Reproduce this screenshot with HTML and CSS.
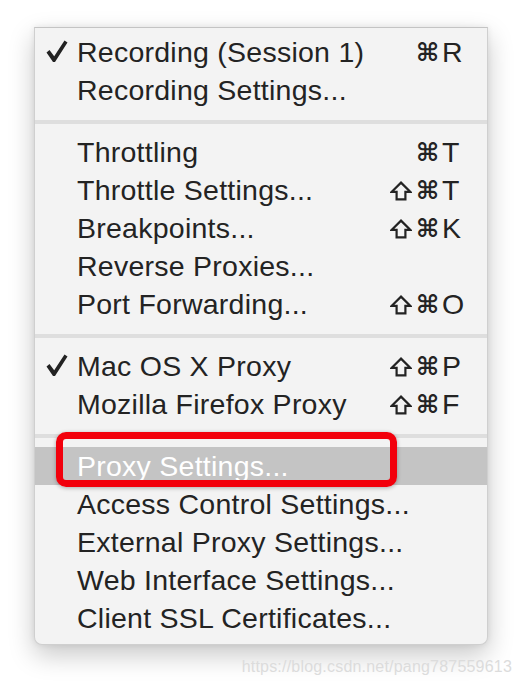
FILE: index.html
```html
<!DOCTYPE html>
<html>
<head>
<meta charset="utf-8">
<link rel="stylesheet" href="styles.css">
</head>
<body>
<div class="menu">
  <div class="row"><span class="check"><svg width="22" height="23" viewBox="0 0 22 23"><path d="M0.5 12.5 L3.5 10 L8.2 16.2 L18.5 0.5 L21.5 2.5 L9 22 L7 22 Z" fill="#222"/></svg></span><span class="label">Recording (Session 1)</span><span class="sc"><span class="cmd">⌘</span><span class="key">R</span></span></div>
  <div class="row"><span class="check"></span><span class="label">Recording Settings...</span></div>
  <div class="sep"></div>
  <div class="row"><span class="check"></span><span class="label">Throttling</span><span class="sc"><span class="cmd">⌘</span><span class="key">T</span></span></div>
  <div class="row"><span class="check"></span><span class="label">Throttle Settings...</span><span class="sc"><span class="shift"><svg width="22" height="20" viewBox="0 0 22 20"><path d="M11 1.6 L20.2 10.8 L15.4 10.8 L15.4 18.4 L6.6 18.4 L6.6 10.8 L1.8 10.8 Z" fill="none" stroke="#232323" stroke-width="2.2" stroke-linejoin="miter"/></svg></span><span class="cmd">⌘</span><span class="key">T</span></span></div>
  <div class="row"><span class="check"></span><span class="label">Breakpoints...</span><span class="sc"><span class="shift"><svg width="22" height="20" viewBox="0 0 22 20"><path d="M11 1.6 L20.2 10.8 L15.4 10.8 L15.4 18.4 L6.6 18.4 L6.6 10.8 L1.8 10.8 Z" fill="none" stroke="#232323" stroke-width="2.2" stroke-linejoin="miter"/></svg></span><span class="cmd">⌘</span><span class="key">K</span></span></div>
  <div class="row"><span class="check"></span><span class="label">Reverse Proxies...</span></div>
  <div class="row"><span class="check"></span><span class="label">Port Forwarding...</span><span class="sc"><span class="shift"><svg width="22" height="20" viewBox="0 0 22 20"><path d="M11 1.6 L20.2 10.8 L15.4 10.8 L15.4 18.4 L6.6 18.4 L6.6 10.8 L1.8 10.8 Z" fill="none" stroke="#232323" stroke-width="2.2" stroke-linejoin="miter"/></svg></span><span class="cmd">⌘</span><span class="key">O</span></span></div>
  <div class="sep"></div>
  <div class="row"><span class="check"><svg width="22" height="23" viewBox="0 0 22 23"><path d="M0.5 12.5 L3.5 10 L8.2 16.2 L18.5 0.5 L21.5 2.5 L9 22 L7 22 Z" fill="#222"/></svg></span><span class="label">Mac OS X Proxy</span><span class="sc"><span class="shift"><svg width="22" height="20" viewBox="0 0 22 20"><path d="M11 1.6 L20.2 10.8 L15.4 10.8 L15.4 18.4 L6.6 18.4 L6.6 10.8 L1.8 10.8 Z" fill="none" stroke="#232323" stroke-width="2.2" stroke-linejoin="miter"/></svg></span><span class="cmd">⌘</span><span class="key">P</span></span></div>
  <div class="row"><span class="check"></span><span class="label">Mozilla Firefox Proxy</span><span class="sc"><span class="shift"><svg width="22" height="20" viewBox="0 0 22 20"><path d="M11 1.6 L20.2 10.8 L15.4 10.8 L15.4 18.4 L6.6 18.4 L6.6 10.8 L1.8 10.8 Z" fill="none" stroke="#232323" stroke-width="2.2" stroke-linejoin="miter"/></svg></span><span class="cmd">⌘</span><span class="key">F</span></span></div>
  <div class="sep"></div>
  <div class="row active"><span class="check"></span><span class="label">Proxy Settings...</span><span class="callout"></span></div>
  <div class="row"><span class="check"></span><span class="label">Access Control Settings...</span></div>
  <div class="row"><span class="check"></span><span class="label">External Proxy Settings...</span></div>
  <div class="row"><span class="check"></span><span class="label">Web Interface Settings...</span></div>
  <div class="row"><span class="check"></span><span class="label">Client SSL Certificates...</span></div>
</div>
<div class="watermark">https://blog.csdn.net/pang787559613</div>
</body>
</html>
```

FILE: styles.css
```css
html, body {
  margin: 0;
  padding: 0;
  background: #ffffff;
}
body {
  font-family: "Liberation Sans", Arial, sans-serif;
  width: 522px;
  height: 688px;
  overflow: hidden;
}
.menu {
  margin: 27px 0 0 34px;
  width: 454px;
  box-sizing: border-box;
  background: #f3f3f3;
  border: 1px solid #cfcfcf;
  border-top-color: #c4c4c4;
  border-radius: 0 0 8px 8px;
  padding: 5px 0 7px;
  box-shadow: 0 10px 26px rgba(0, 0, 0, 0.22), 0 0 6px rgba(0, 0, 0, 0.08);
}
.row {
  position: relative;
  display: grid;
  grid-template-columns: 42px 1fr auto;
  align-items: center;
  height: 38px;
  padding-right: 23px;
  color: #232323;
  font-size: 28.5px;
}
.check {
  display: flex;
  align-items: center;
  padding-left: 11px;
  height: 38px;
}
.check svg {
  display: block;
  margin-top: -1px;
}
.label {
  white-space: nowrap;
  letter-spacing: 0.25px;
}
.sc {
  display: grid;
  grid-template-columns: 28px 24px 22px;
  align-items: center;
}
.shift {
  grid-column: 1;
  display: flex;
  align-items: center;
}
.shift svg {
  display: block;
  margin-top: 1px;
}
.cmd {
  grid-column: 2;
  font-family: "DejaVu Sans", sans-serif;
  font-size: 25px;
  font-weight: bold;
  line-height: 1;
  margin-left: -2px;
}
.key {
  grid-column: 3;
}
.sep {
  height: 24px;
  display: flex;
  align-items: center;
}
.sep::before {
  content: "";
  display: block;
  width: 100%;
  height: 4px;
  margin-top: 2px;
  background: #dedede;
}
.row.active {
  background: #c4c4c4;
  color: #ffffff;
}
.callout {
  position: absolute;
  left: 21px;
  top: -15px;
  width: 341px;
  height: 55px;
  box-sizing: border-box;
  border: 7px solid #f2000c;
  border-radius: 10px;
  box-shadow: 0 1px 4px rgba(0, 0, 0, 0.3);
}
.watermark {
  text-align: right;
  padding-right: 10px;
  margin-top: 13px;
  font-size: 16px;
  color: #dcdcdc;
  letter-spacing: 0.2px;
}
```
